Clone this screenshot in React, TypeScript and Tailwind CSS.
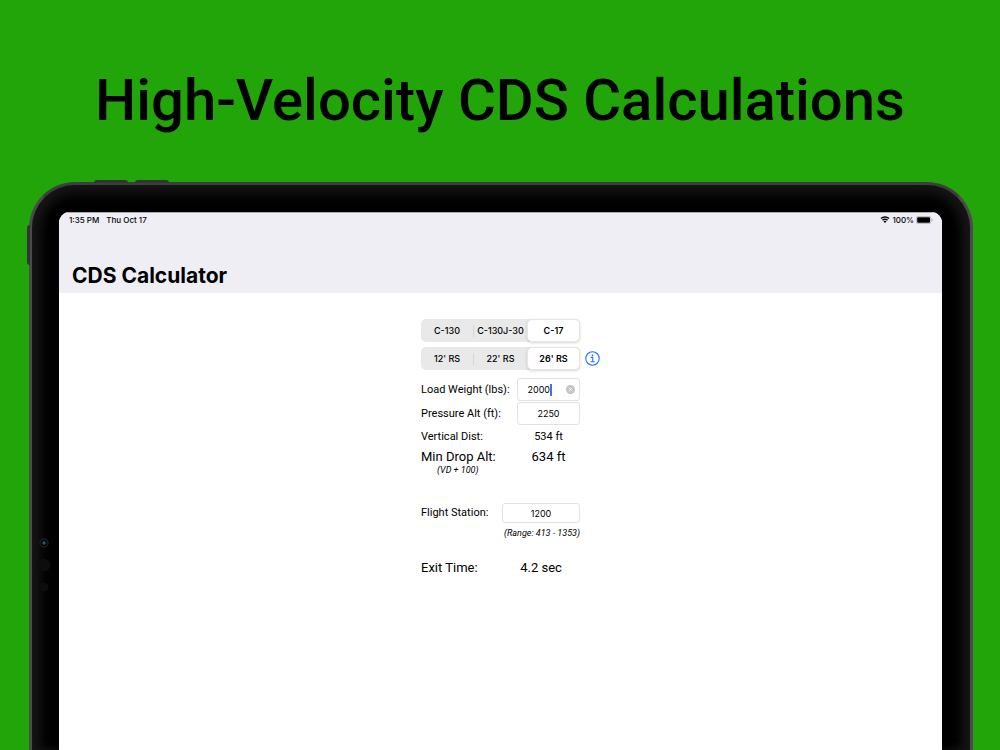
import { useState } from "react"

interface SegmentedProps {
  name: string
  options: string[]
  value: string
  onChange: (value: string) => void
}

function Segmented({ name, options, value, onChange }: SegmentedProps) {
  const selected = options.indexOf(value)

  return (
    <fieldset aria-label={name} className="flex h-[23px] w-full rounded-[5px] bg-[#e9e9e9]">
      {options.map((option, index) => (
        <label
          key={option}
          className={
            index === selected
              ? "flex w-1/3 items-center justify-center rounded-[5px] border border-[#e6e6e6] bg-white text-[9px] font-semibold shadow-[0_1px_3px_rgba(0,0,0,0.16)]"
              : "flex w-1/3 items-center justify-center text-[9px] font-medium whitespace-nowrap"
          }
        >
          <input
            type="radio"
            name={name}
            checked={index === selected}
            onChange={() => onChange(option)}
            className="sr-only"
          />
          <span className="flex-1 text-center">{option}</span>
          {index + 1 < selected && <span className="h-3 w-px bg-[#d6d6d6]" />}
        </label>
      ))}
    </fieldset>
  )
}

function StatusBar() {
  return (
    <div className="flex h-[13px] items-center justify-between pr-[9px] pl-[10px] text-[8px] font-medium">
      <div className="flex gap-[7px]">
        <span>1:35 PM</span>
        <span>Thu Oct 17</span>
      </div>
      <div className="flex items-center gap-[2px]">
        <svg width="10" height="7" viewBox="0 0 20 14" fill="none" stroke="black">
          <path d="M2 5.2a11.5 11.5 0 0 1 16 0" strokeWidth="2.8" />
          <path d="M5 8.6a7 7 0 0 1 10 0" strokeWidth="2.8" />
          <path d="M10 14 7 11a4.2 4.2 0 0 1 6 0Z" fill="black" stroke="none" />
        </svg>
        <span>100%</span>
        <svg width="17" height="8" viewBox="0 0 34 16">
          <rect x="0.7" y="0.7" width="29" height="14.6" rx="4" fill="none" stroke="#9d9da1" strokeWidth="1.4" />
          <rect x="2.4" y="2.4" width="25.6" height="11.2" rx="2.2" fill="black" />
          <path d="M31.4 5.2c2.4.8 2.4 4.8 0 5.6Z" fill="#9d9da1" />
        </svg>
      </div>
    </div>
  )
}

function Calculator() {
  const [aircraft, setAircraft] = useState("C-17")
  const [station, setStation] = useState("26' RS")
  const [weight, setWeight] = useState("2000")
  const [altitude, setAltitude] = useState("2250")
  const [flightStation, setFlightStation] = useState("1200")

  return (
    <main className="mx-auto w-[159px] pt-[26px] font-['Roboto',sans-serif] text-[11px] leading-4">
      <div className="font-['Inter',sans-serif]">
        <Segmented name="Aircraft" options={["C-130", "C-130J-30", "C-17"]} value={aircraft} onChange={setAircraft} />
        <div className="relative mt-[5px]">
          <Segmented name="Station" options={["12' RS", "22' RS", "26' RS"]} value={station} onChange={setStation} />
          <button type="button" aria-label="Info" className="absolute top-1 left-full ml-[5px]">
            <svg width="15" height="15" viewBox="0 0 30 30" fill="none" stroke="#1f6fff">
              <circle cx="15" cy="15" r="13.4" strokeWidth="2.2" />
              <path d="M12 12.7h3.5v8.5M11.8 21.3h7" strokeWidth="2.1" strokeLinecap="round" />
              <circle cx="15" cy="8.6" r="1.8" fill="#1f6fff" stroke="none" />
            </svg>
          </button>
        </div>
      </div>

      <div className="mt-2 flex items-center justify-between">
        <label htmlFor="weight" className="whitespace-nowrap">Load Weight (lbs):</label>
        <div className="flex h-[23px] w-[63px] shrink-0 items-center rounded-[3px] border border-[#e2e2e2] pr-1">
          <input
            id="weight"
            value={weight}
            onChange={(e) => setWeight(e.target.value)}
            className="w-8 min-w-0 text-right font-['Inter',sans-serif] text-[9px] outline-none"
          />
          <span className="h-3 w-[2px] shrink-0 bg-[#4a6cf0]" />
          <button type="button" aria-label="Clear" onClick={() => setWeight("")} className="ml-auto">
            <svg width="9" height="9" viewBox="0 0 18 18">
              <circle cx="9" cy="9" r="9" fill="#c3c3c5" />
              <path d="m6 6 6 6m0-6-6 6" stroke="white" strokeWidth="1.6" strokeLinecap="round" />
            </svg>
          </button>
        </div>
      </div>
      <div className="mt-px flex items-center justify-between">
        <label htmlFor="altitude">Pressure Alt (ft):</label>
        <input
          id="altitude"
          value={altitude}
          onChange={(e) => setAltitude(e.target.value)}
          className="h-[23px] w-[63px] rounded-[3px] border border-[#e2e2e2] text-center font-['Inter',sans-serif] text-[9px]"
        />
      </div>
      <div className="mt-1 flex justify-between">
        <span>Vertical Dist:</span>
        <span className="w-[63px] text-center">534 ft</span>
      </div>
      <div className="mt-1 flex justify-between text-[13px]">
        <span>Min Drop Alt:</span>
        <span className="w-[63px] text-center">634 ft</span>
      </div>
      <p className="ml-4 text-[9px] leading-[10px] italic">(VD + 100)</p>

      <div className="mt-7 flex items-center justify-between">
        <label htmlFor="station">Flight Station:</label>
        <input
          id="station"
          value={flightStation}
          onChange={(e) => setFlightStation(e.target.value)}
          className="h-5 w-[78px] rounded-[3px] border border-[#e2e2e2] text-center font-['Inter',sans-serif] text-[9px]"
        />
      </div>
      <p className="mt-1 text-right text-[9px] leading-3 whitespace-nowrap italic">(Range: 413 - 1353)</p>
      <div className="mt-[21px] flex justify-between text-[13px]">
        <span>Exit Time:</span>
        <span className="w-[78px] text-center">4.2 sec</span>
      </div>
    </main>
  )
}

export default function App() {
  return (
    <div className="flex h-screen flex-col overflow-hidden bg-[#21a508] font-['Inter',sans-serif] text-black">
      <h1 className="pt-16 text-center font-['Roboto',sans-serif] text-[58px] leading-[72px] font-medium whitespace-nowrap">
        High-Velocity CDS Calculations
      </h1>

      {/* Tablet, running off the bottom of the page */}
      <div className="relative mt-[46px] mr-[27px] ml-[29px] flex flex-1 flex-col rounded-t-[46px] border-x-[3px] border-t-[3px] border-x-[#4b4b4d] border-t-[#3e3e40] bg-black pt-[27px] pr-7 pl-[27px] shadow-[inset_0_8px_14px_#161616,inset_12px_0_14px_-4px_#161616,inset_-12px_0_14px_-4px_#161616]">
        {/* Hardware buttons */}
        <span className="absolute -top-[5px] left-[62px] h-[3px] w-[34px] rounded-t-sm bg-[#343436]" />
        <span className="absolute -top-[5px] left-[103px] h-[3px] w-[34px] rounded-t-sm bg-[#343436]" />
        <span className="absolute top-10 -left-[5px] h-10 w-[3px] rounded-l-sm bg-[#343436]" />
        {/* Camera and sensors */}
        <svg className="absolute top-[350px] left-[5px]" width="14" height="64" viewBox="0 0 14 64">
          <circle cx="7" cy="8" r="4" fill="#050505" stroke="#1c1f1f" strokeWidth="1.5" />
          <circle cx="7" cy="8" r="1.7" fill="#12606a" />
          <circle cx="7" cy="30" r="6.5" fill="#0d0d0d" />
          <circle cx="7" cy="52" r="4.5" fill="#0d0d0d" />
        </svg>

        <div className="flex-1 overflow-hidden rounded-t-[11px] bg-white">
          <header className="border-t border-[#aaa9ae] bg-[#efeef5] pb-[3px]">
            <StatusBar />
            <h2 className="mt-9 pl-[13px] text-[21px] leading-7 font-bold">CDS Calculator</h2>
          </header>
          <Calculator />
        </div>
      </div>
    </div>
  )
}
